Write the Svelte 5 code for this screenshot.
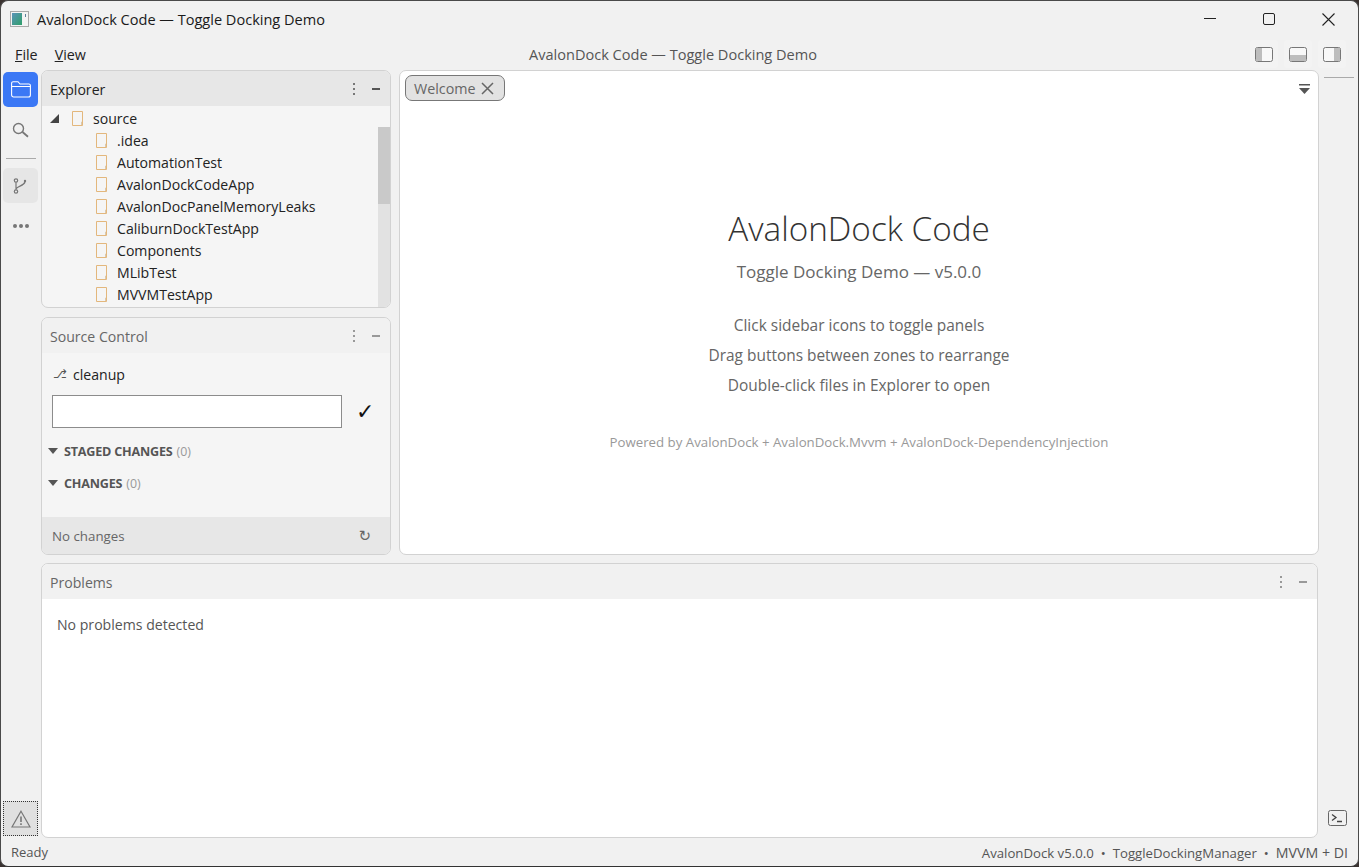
<script>
  const files = ['.idea','AutomationTest','AvalonDockCodeApp','AvalonDocPanelMemoryLeaks','CaliburnDockTestApp','Components','MLibTest','MVVMTestApp'];
</script>

{#snippet fileIcon()}
  <svg class="file" width="12" height="15" viewBox="0 0 12 15"><path d="M0.5 0.5H10.5V14.5H0.5Z" fill="none" stroke="#e3b77c"/><path d="M9.500 14V11H10" fill="none" stroke="#d9c9b0"/></svg>
{/snippet}
{#snippet panelTools()}
  <span class="vdots"><i></i><i></i><i></i></span><span class="dash"></span>
{/snippet}

<div class="window">
  <header class="titlebar">
    <svg class="appicon" width="19" height="16" viewBox="0 0 19 16">
      <defs><linearGradient id="g" x1="0" y1="0" x2="1" y2="1"><stop offset="0" stop-color="#5a93b8"/><stop offset="1" stop-color="#2f9f6a"/></linearGradient></defs>
      <rect x="0.5" y="0.5" width="18" height="15" fill="#f3f3f3" stroke="#a9a9a9"/><rect x="2" y="2" width="10" height="12" fill="url(#g)"/><rect x="15" y="3" width="1" height="3" fill="#5b7f9b"/>
    </svg>
    <span class="wtitle">AvalonDock Code — Toggle Docking Demo</span>
    <div class="winbtns">
      <svg width="12" height="12" viewBox="0 0 12 12"><path d="M0 5.500H12" stroke="#222"/></svg>
      <svg width="12" height="12" viewBox="0 0 12 12"><rect x="0.5" y="0.5" width="11" height="11" rx="1.5" fill="none" stroke="#222"/></svg>
      <svg width="13" height="13" viewBox="0 0 13 13"><path d="M0.500 0.500L12.500 12.500M12.500 0.500L0.500 12.500" stroke="#222" stroke-width="1.1"/></svg>
    </div>
  </header>

  <div class="menubar">
    <nav><span><u>F</u>ile</span><span><u>V</u>iew</span></nav>
    <span class="mtitle">AvalonDock Code — Toggle Docking Demo</span>
    <div class="layoutbtns">
      <span class="lbtn"><svg width="18" height="15" viewBox="0 0 18 15"><rect x="0.5" y="0.5" width="17" height="14" rx="2" fill="#f8f8f8" stroke="#777"/><rect x="1" y="1" width="6" height="13" fill="#bdbdbd"/></svg></span>
      <span class="lbtn"><svg width="18" height="15" viewBox="0 0 18 15"><rect x="0.5" y="0.5" width="17" height="14" rx="2" fill="#f8f8f8" stroke="#777"/><rect x="1" y="8" width="16" height="6" fill="#bdbdbd"/></svg></span>
      <span class="lbtn"><svg width="18" height="15" viewBox="0 0 18 15"><rect x="0.5" y="0.5" width="17" height="14" rx="2" fill="#f8f8f8" stroke="#777"/><rect x="11" y="1" width="6" height="13" fill="#bdbdbd"/></svg></span>
    </div>
  </div>

  <div class="body">
    <aside class="activity">
      <button class="act active" aria-label="Explorer"><svg width="20" height="17" viewBox="0 0 20 17"><path d="M0.600 14V2.200A1.500 1.500 0 0 1 2.100 0.700H7L9 3H17.900A1.500 1.500 0 0 1 19.400 4.500V14A2 2 0 0 1 17.400 16H2.600A2 2 0 0 1 0.600 14ZM0.600 5.500H19.400" fill="none" stroke="#fff" stroke-width="1.1"/></svg></button>
      <button class="act search" aria-label="Search"><svg width="17" height="16" viewBox="0 0 17 16"><circle cx="6.500" cy="6.500" r="5" fill="none" stroke="#777" stroke-width="1.4"/><path d="M10.500 10L16 14.800" stroke="#777" stroke-width="1.800"/></svg></button>
      <div class="sep"></div>
      <button class="act soft" aria-label="Git"><svg width="15" height="16" viewBox="0 0 15 16"><circle cx="3" cy="2.500" r="1.700" fill="none" stroke="#777" stroke-width="1.2"/><circle cx="3" cy="13.500" r="1.700" fill="none" stroke="#777" stroke-width="1.2"/><circle cx="12" cy="3" r="1.200" fill="#777"/><path d="M3 4.200V11.800M3 11C4 8 11 8 12 4" fill="none" stroke="#777" stroke-width="1.2"/></svg></button>
      <div class="more"><i></i><i></i><i></i></div>
      <div class="spacer"></div>
      <button class="act warn" aria-label="Problems"><svg width="20" height="18" viewBox="0 0 20 18"><path d="M10 1.200L19 17H1Z" fill="none" stroke="#777" stroke-width="1.2"/><path d="M10 6.500V12" stroke="#777" stroke-width="1.600"/><path d="M10 13.300V15" stroke="#777" stroke-width="1.600"/></svg></button>
    </aside>

    <div class="center">
      <div class="toprow">
        <div class="leftcol">
          <section class="panel explorer">
            <div class="phead focus"><span>Explorer</span>{@render panelTools()}</div>
            <div class="tree">
              <div class="rows">
                <div class="row root"><svg class="arrow" width="9" height="9" viewBox="0 0 9 9"><path d="M9 0V9H0Z" fill="#444"/></svg>{@render fileIcon()}<span>source</span></div>
                {#each files as f}
                  <div class="row child">{@render fileIcon()}<span>{f}</span></div>
                {/each}
              </div>
              <div class="scroll"><div class="thumb"></div><div class="track"></div></div>
            </div>
          </section>

          <section class="panel scm">
            <div class="phead dim"><span>Source Control</span>{@render panelTools()}</div>
            <div class="scmbody">
              <div class="branch"><span class="alt">⎇</span><span>cleanup</span></div>
              <div class="commit"><div class="input"></div><span class="check">✓</span></div>
              <div class="group first"><i class="tri"></i><b>STAGED CHANGES</b><em>(0)</em></div>
              <div class="group"><i class="tri"></i><b>CHANGES</b><em>(0)</em></div>
            </div>
            <div class="scmfoot"><span>No changes</span><span class="refresh">↻</span></div>
          </section>
        </div>

        <section class="doc">
          <div class="tabs">
            <div class="tab"><span>Welcome</span><svg width="13" height="13" viewBox="0 0 13 13"><path d="M1 1L12 12M12 1L1 12" stroke="#666" stroke-width="1.5"/></svg></div>
            <svg class="tabmenu" width="11" height="10" viewBox="0 0 11 10"><path d="M0 0.800H11" stroke="#555" stroke-width="1.600"/><path d="M0 4H11L5.500 10Z" fill="#555"/></svg>
          </div>
          <div class="welcome">
            <h1>AvalonDock Code</h1>
            <p class="sub">Toggle Docking Demo — v5.0.0</p>
            <p class="tip first">Click sidebar icons to toggle panels</p>
            <p class="tip">Drag buttons between zones to rearrange</p>
            <p class="tip">Double-click files in Explorer to open</p>
            <p class="pow">Powered by AvalonDock + AvalonDock.Mvvm + AvalonDock-DependencyInjection</p>
          </div>
        </section>
      </div>

      <section class="panel problems">
        <div class="phead dim"><span>Problems</span>{@render panelTools()}</div>
        <div class="probbody">No problems detected</div>
      </section>
    </div>

    <aside class="rightbar">
      <div class="rline"></div>
      <svg class="term" width="19" height="16" viewBox="0 0 19 16"><rect x="0.500" y="0.500" width="18" height="15" rx="2" fill="none" stroke="#666"/><path d="M4 4.500L8 7.500L4 10.500" fill="none" stroke="#444" stroke-width="1.3"/><path d="M9 11.500H14" stroke="#444" stroke-width="1.300"/></svg>
    </aside>
  </div>

  <footer class="status">
    <span>Ready</span>
    <span class="right">AvalonDock v5.0.0<i>•</i>ToggleDockingManager<i>•</i><span class="mv">MVVM + DI</span></span>
  </footer>
</div>

<style>
  :global(body) { margin: 0; background: #3a3230; }
  .window {
    width: 1359px; height: 867px; box-sizing: border-box;
    background: #f1f1f1; border: 1px solid #4a4a4a; border-bottom-color: #333; border-radius: 8px;
    display: flex; flex-direction: column; overflow: hidden;
    font-family: "Open Sans", "Noto Sans", sans-serif; font-size: 14.1px; color: #222;
  }
  .titlebar { height: 36px; flex: none; display: flex; align-items: center; padding-left: 9px; gap: 8px; }
  .wtitle { font-size: 14.55px; color: #1a1a1a; }
  .winbtns { margin-left: auto; display: flex; align-items: center; width: 154px; justify-content: space-between; padding-right: 23px; box-sizing: border-box; }
  .menubar { height: 33px; flex: none; display: flex; align-items: center; position: relative; padding: 1px 0 0 14px; box-sizing: border-box; }
  nav { display: flex; gap: 17px; color: #222; font-size: 14.3px; }
  .mtitle { position: absolute; left: 0; right: 13px; text-align: center; color: #555; font-size: 14.55px; }
  .layoutbtns { margin-left: auto; display: flex; gap: 6px; padding-right: 12px; position: relative; }
  .lbtn { width: 28px; height: 28px; display: flex; align-items: center; justify-content: center; background: #f3f3f3; border-radius: 3px; }
  .body { flex: 1; min-height: 0; display: flex; }
  .activity { width: 40px; flex: none; display: flex; flex-direction: column; align-items: center; padding: 2px 3px 0 2px; box-sizing: border-box; }
  .act { width: 35px; height: 35px; padding: 0; border: 0; border-radius: 5px; background: transparent; display: flex; align-items: center; justify-content: center; flex: none; margin-bottom: 2px; }
  .act.active { background: #3b78f5; }
  .act.search { padding-top: 6px; box-sizing: border-box; }
  .act.soft { background: #e6e6e6; }
  .sep { width: 30px; height: 1px; background: #aaa; margin: 12px 0 9px; }
  .more { height: 42px; display: flex; gap: 2px; align-items: center; justify-content: center; }
  .more i { width: 4px; height: 4px; border-radius: 50%; background: #777; }
  .spacer { flex: 1; }
  .act.warn { background: #e0e0e0; border: 1px dotted #333; border-radius: 0; box-sizing: border-box; margin-bottom: 2px; }
  .center { flex: 1; min-width: 0; display: flex; flex-direction: column; gap: 8px; }
  .toprow { height: 485px; flex: none; display: flex; gap: 8px; }
  .leftcol { width: 350px; flex: none; display: flex; flex-direction: column; gap: 9px; }
  .panel { border: 1px solid #d2d2d2; border-radius: 7px; overflow: hidden; display: flex; flex-direction: column; box-sizing: border-box; background: #f5f5f5; }
  .explorer { height: 238px; flex: none; }
  .scm { flex: 1; min-height: 0; }
  .phead { height: 35px; flex: none; display: flex; align-items: center; padding: 1px 10px 0 8px; box-sizing: border-box; background: #f1f1f1; color: #666; }
  .phead > span:first-child { flex: 1; }
  .phead.focus { background: #e7e7e7; color: #222; }
  .vdots { display: flex; flex-direction: column; gap: 3px; width: 4px; margin-right: 16px; align-items: center; margin-top: -1px; }
  .vdots i { width: 2px; height: 2px; background: #999; }
  .dash { width: 8px; height: 2px; background: #999; }
  .focus .dash { background: #555; }
  .focus .vdots i { background: #777; }
  .tree { flex: 1; min-height: 0; display: flex; overflow: hidden; position: relative; }
  .rows { flex: 1; padding-top: 1px; }
  .row { height: 22px; display: flex; align-items: center; color: #222; }
  .root { padding-left: 8px; }
  .arrow { margin-right: 13px; }
  .child { padding-left: 54px; }
  .file { margin-right: 9px; flex: none; }
  .scroll { width: 12px; flex: none; display: flex; flex-direction: column; padding-top: 21px; height: 181px; }
  .thumb { height: 77px; background: #c9c9c9; flex: none; }
  .track { flex: 1; background: #e2e2e2; }
  .scmbody { flex: 1; min-height: 0; }
  .branch { display: flex; align-items: center; gap: 6px; padding: 10px 0 0 11px; height: 22px; color: #222; }
  .alt { font-family: "DejaVu Sans", sans-serif; font-size: 12px; color: #555; width: 14px; }
  .commit { display: flex; align-items: center; margin: 10px 0 0 10px; }
  .input { width: 288px; height: 31px; border: 1px solid #8c8c8c; background: #fff; }
  .check { margin-left: 14px; font-size: 22px; color: #111; font-family: "DejaVu Sans", sans-serif; line-height: 1; }
  .group { display: flex; align-items: center; margin-left: 6px; height: 20px; margin-top: 12px; font-size: 12.6px; color: #555; letter-spacing: -0.2px; }
  .group.first { margin-top: 13px; }
  .tri { width: 0; height: 0; border: 5.500px solid transparent; border-top: 6px solid #555; border-bottom: 0; margin-right: 5px; }
  .group b { margin-left: 1px; }
  .group em { font-style: normal; color: #999; margin-left: 4px; font-size: 12.4px; letter-spacing: 0; }
  .scmfoot { height: 37px; flex: none; background: #e7e7e7; display: flex; align-items: center; justify-content: space-between; padding: 1px 19px 0 10px; box-sizing: border-box; color: #666; font-size: 13.3px; }
  .refresh { font-family: "DejaVu Sans", sans-serif; font-size: 15px; }
  .doc { flex: 1; min-width: 0; background: #fff; border: 1px solid #d2d2d2; border-radius: 7px; box-sizing: border-box; display: flex; flex-direction: column; }
  .tabs { height: 36px; flex: none; display: flex; justify-content: space-between; padding: 4px 8px 0 5px; box-sizing: border-box; }
  .tab { height: 26px; box-sizing: border-box; border: 1px solid #777; border-radius: 7px; background: #e2e2e2; color: #666; display: flex; align-items: center; gap: 5px; padding: 0 10px 0 8px; font-size: 14.3px; }
  .tabmenu { margin: 9px 0 0 0; }
  .welcome { text-align: center; color: #555; padding-top: 99px; }
  .welcome p { margin: 0; }
  h1 { margin: 0; font-size: 33.3px; font-weight: 300; color: #333; line-height: 44px; }
  .sub { font-size: 17px; line-height: 22px; margin-top: 11px !important; color: #666; }
  .tip { font-size: 15.45px; line-height: 30px; color: #666; }
  .tip.first { margin-top: 27px !important; }
  .pow { font-size: 13.25px; color: #999; margin-top: 33px !important; line-height: 18px; }
  .problems { flex: 1; min-height: 0; background: #fff; margin-right: 1px; }
  .probbody { padding: 16px 15px; color: #555; }
  .rightbar { width: 39px; flex: none; position: relative; display: flex; flex-direction: column; align-items: center; justify-content: space-between; padding: 7px 0 12px; box-sizing: border-box; }
  .rline { width: 30px; height: 1px; background: #aaa; }
  .term { margin-right: 3px; }
  .status { height: 28px; flex: none; display: flex; justify-content: space-between; align-items: center; padding: 0 10px; color: #555; font-size: 13px; }
  .right { font-size: 13.2px; }
  .mv { font-size: 14.2px; }
  .status i { font-style: normal; margin: 0 7px; }
</style>
